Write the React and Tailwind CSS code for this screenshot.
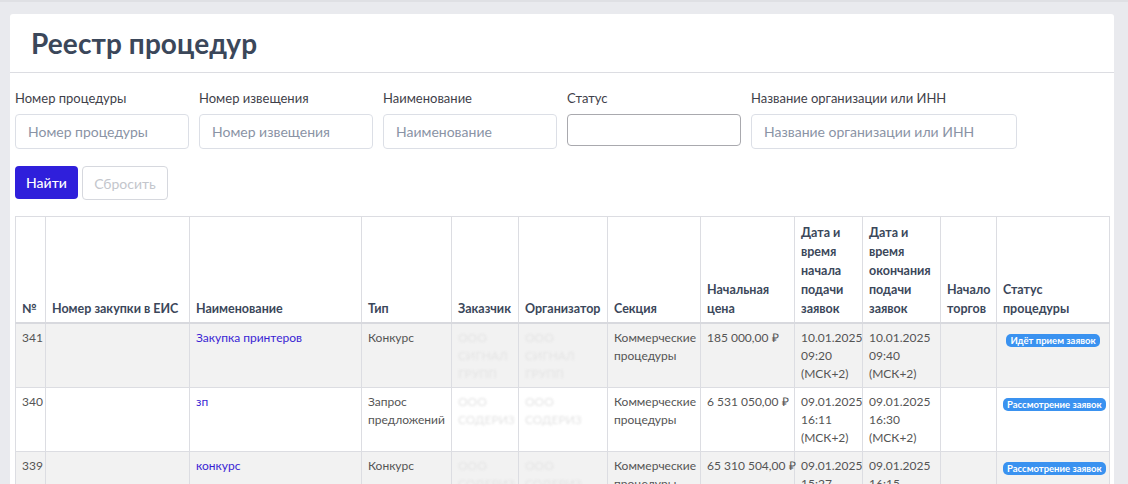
const fields = [
  { label: "Номер процедуры", ph: "Номер процедуры", w: "w-[174px]" },
  { label: "Номер извещения", ph: "Номер извещения", w: "w-[174px]" },
  { label: "Наименование", ph: "Наименование", w: "w-[174px]" },
  { label: "Статус", ph: "", w: "w-[174px]", select: true },
  { label: "Название организации или ИНН", ph: "Название организации или ИНН", w: "w-[266px]" },
];

const columns = [
  { title: "№", w: "w-[30px]" },
  { title: "Номер закупки в ЕИС", w: "w-[144px]" },
  { title: "Наименование", w: "w-[172px]" },
  { title: "Тип", w: "w-[90px]" },
  { title: "Заказчик", w: "w-[67px]" },
  { title: "Организатор", w: "w-[89px]" },
  { title: "Секция", w: "w-[93px]" },
  { title: "Начальная цена", w: "w-[94px]" },
  { title: "Дата и время начала подачи заявок", w: "w-[68px]" },
  { title: "Дата и время окончания подачи заявок", w: "w-[78px]" },
  { title: "Начало торгов", w: "w-[56px]" },
  { title: "Статус процедуры", w: "w-[113px]" },
];

const rows = [
  {
    id: 341,
    name: "Закупка принтеров",
    type: "Конкурс",
    customer: "ООО СИГНАЛ ГРУПП",
    org: "ООО СИГНАЛ ГРУПП",
    price: "185 000,00 ₽",
    start: ["10.01.2025", "09:20", "(МСК+2)"],
    end: ["10.01.2025", "09:40", "(МСК+2)"],
    status: "Идёт прием заявок",
  },
  {
    id: 340,
    name: "зп",
    type: "Запрос предложений",
    customer: "ООО СОДЕРИЗ",
    org: "ООО СОДЕРИЗ",
    price: "6 531 050,00 ₽",
    start: ["09.01.2025", "16:11", "(МСК+2)"],
    end: ["09.01.2025", "16:30", "(МСК+2)"],
    status: "Рассмотрение заявок",
  },
  {
    id: 339,
    name: "конкурс",
    type: "Конкурс",
    customer: "ООО СОДЕРИЗ",
    org: "ООО СОДЕРИЗ",
    price: "65 310 504,00 ₽",
    start: ["09.01.2025", "15:27", "(МСК+2)"],
    end: ["09.01.2025", "16:15", "(МСК+2)"],
    status: "Рассмотрение заявок",
  },
];

const td = "border border-[#dcdde2] px-[6px] pt-[5px] pb-[4px] align-top";

const Blurred = ({ children }) => (
  <span className="block text-[#e4e4e4] blur-[1px] select-none">{children}</span>
);

export default function App() {
  return (
    <div
      className="min-h-screen bg-[#e9eaee] pt-[12px] pl-[10px] pr-[14px] border-t-2 border-[#dfe0e4]"
      style={{ fontFamily: 'Lato, "Open Sans", sans-serif' }}
    >
      <div className="bg-white rounded-t-[3px] overflow-hidden">
        <div className="h-[59px] border-b border-[#dcdde2] flex items-center px-[21px]">
          <h1 className="text-[28px] font-bold text-[#3b475a] tracking-[0.1px]">Реестр процедур</h1>
        </div>

        <div className="px-[5px] pt-[15px]">
          <div className="flex gap-[10px]">
            {fields.map((f) => (
              <div key={f.label} className={f.w}>
                <div className="text-[13px] text-[#3f3f4a] h-[26px] leading-[20px]">{f.label}</div>
                {f.select ? (
                  <div className="h-[32px] rounded-[4px] border border-[#a9a9ae] bg-white" />
                ) : (
                  <input
                    readOnly
                    placeholder={f.ph}
                    className="w-full h-[35px] rounded-[4px] border border-[#dcdfe6] px-[12px] text-[14px] text-[#333] placeholder:text-[#8a93a5] outline-none"
                  />
                )}
              </div>
            ))}
          </div>

          <div className="flex gap-[4px] mt-[17px]">
            <button className="h-[33px] w-[63px] rounded-[4px] bg-[#2f1fdb] text-white text-[14px] font-medium">
              Найти
            </button>
            <button className="h-[34px] w-[86px] rounded-[4px] border border-[#d6d8de] text-[#c3c6cc] text-[14px]">
              Сбросить
            </button>
          </div>

          <table className="mt-[16px] table-fixed border-collapse w-[1094px] text-[#555]">
            <thead>
              <tr>
                {columns.map((c) => (
                  <th
                    key={c.title}
                    className={`${c.w} border border-[#dcdde2] border-b-2 border-b-[#d8d9de] px-[6px] pt-[6px] pb-[4px] align-bottom text-left text-[12.5px] leading-[19px] font-bold text-[#3b475a]`}
                  >
                    {c.title}
                  </th>
                ))}
              </tr>
            </thead>
            <tbody className="text-[12px] leading-[18px]">
              {rows.map((r, i) => (
                <tr key={r.id} className={i % 2 === 0 ? "bg-[#f2f2f2]" : "bg-white"}>
                  <td className={td}>{r.id}</td>
                  <td className={td}></td>
                  <td className={td}>
                    <a className="text-[#3a1fd4]">{r.name}</a>
                  </td>
                  <td className={td}>{r.type}</td>
                  <td className={td}>
                    <Blurred>{r.customer}</Blurred>
                  </td>
                  <td className={td}>
                    <Blurred>{r.org}</Blurred>
                  </td>
                  <td className={td}>Коммерческие процедуры</td>
                  <td className={`${td} whitespace-nowrap`}>{r.price}</td>
                  <td className={td}>
                    {r.start.map((s) => (
                      <div key={s}>{s}</div>
                    ))}
                  </td>
                  <td className={td}>
                    {r.end.map((s) => (
                      <div key={s}>{s}</div>
                    ))}
                  </td>
                  <td className={td}></td>
                  <td className={`${td} text-center pt-[7px]`}>
                    <span className="inline-block rounded-[5px] bg-[#3a92f0] text-white text-[9.5px] font-bold leading-[13px] px-[4px] whitespace-nowrap">
                      {r.status}
                    </span>
                  </td>
                </tr>
              ))}
            </tbody>
          </table>
        </div>
      </div>
    </div>
  );
}
